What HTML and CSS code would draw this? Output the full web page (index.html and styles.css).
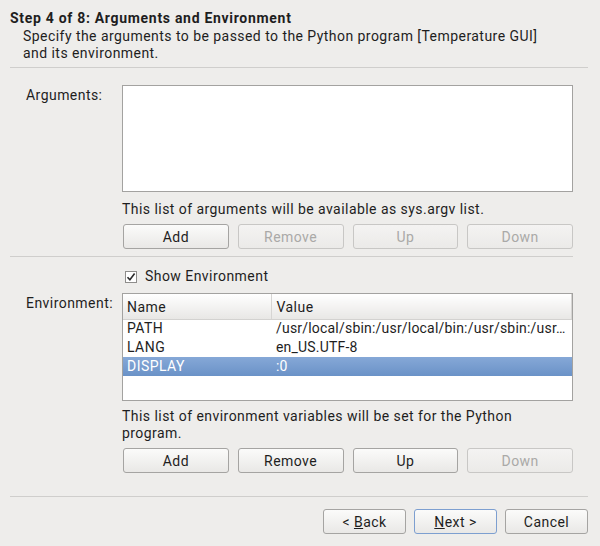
FILE: index.html
```html
<!DOCTYPE html>
<html lang="en">
<head>
  <meta charset="UTF-8" />
  <title>Step 4 of 8: Arguments and Environment</title>
  <link rel="stylesheet" href="styles.css">
</head>
<body>
  <div class="wizard">
    <!-- Step header -->
    <div class="step-head">
      <h1 class="step-title">Step 4 of 8: Arguments and Environment</h1>
      <p class="step-desc">Specify the arguments to be passed to the Python program [Temperature GUI]<br>and its environment.</p>
    </div>
    <hr class="sep sep-head">

    <!-- Arguments -->
    <div class="form-row">
      <div class="row-label">Arguments:</div>
      <div class="row-body">
        <div class="list-box args-box"></div>
        <p class="hint">This list of arguments will be available as sys.argv list.</p>
        <div class="btn-row">
          <button class="btn">Add</button>
          <button class="btn" disabled>Remove</button>
          <button class="btn" disabled>Up</button>
          <button class="btn" disabled>Down</button>
        </div>
      </div>
    </div>
    <hr class="sep sep-inner">

    <!-- Environment -->
    <div class="form-row">
      <div class="row-label"></div>
      <div class="row-body">
        <label class="check">
          <span class="check-box">
            <svg width="12" height="12" viewBox="0 0 12 12"><path d="M2.5 6.2 L4.9 8.8 L9.6 2.6" fill="none" stroke="#2b2b2b" stroke-width="1.6"/></svg>
          </span>
          Show Environment
        </label>
      </div>
    </div>
    <div class="form-row env-row">
      <div class="row-label">Environment:</div>
      <div class="row-body">
        <div class="list-box env-box">
          <table class="env-table">
            <colgroup><col class="col-name"><col></colgroup>
            <thead>
              <tr><th>Name</th><th>Value</th></tr>
            </thead>
            <tbody>
              <tr><td>PATH</td><td>/usr/local/sbin:/usr/local/bin:/usr/sbin:/usr…</td></tr>
              <tr><td>LANG</td><td>en_US.UTF-8</td></tr>
              <tr class="selected"><td>DISPLAY</td><td>:0</td></tr>
            </tbody>
          </table>
        </div>
        <p class="hint hint-env">This list of environment variables will be set for the Python<br>program.</p>
        <div class="btn-row">
          <button class="btn">Add</button>
          <button class="btn">Remove</button>
          <button class="btn">Up</button>
          <button class="btn" disabled>Down</button>
        </div>
      </div>
    </div>
    <hr class="sep sep-foot">

    <!-- Navigation -->
    <div class="nav-row">
      <button class="btn nav-btn">&lt; <u>B</u>ack</button>
      <button class="btn nav-btn default"><u>N</u>ext &gt;</button>
      <button class="btn nav-btn">Cancel</button>
    </div>
  </div>
</body>
</html>
```

FILE: styles.css
```css
* {
  box-sizing: border-box;
}

body {
  margin: 0;
  background: #eeedeb;
  font-family: Roboto, "Open Sans", sans-serif;
  font-size: 14px;
  line-height: 17px;
  letter-spacing: 0.45px;
  color: #1e1e1e;
}

.wizard {
  padding: 10px 12px 0 10px;
}

.step-title {
  margin: 0;
  font-size: 14px;
  font-weight: bold;
  line-height: 17px;
  letter-spacing: 0.7px;
}

.step-desc {
  margin: 1px 0 0 13px;
}

.sep {
  margin: 5px 0 0 0;
  border: none;
  border-top: 1px solid #cfcecc;
  height: 0;
}

.sep-head {
  margin-bottom: 17px;
}

.form-row {
  display: flex;
  margin-left: 16px;
}

.row-label {
  width: 96px;
  flex: none;
  padding-top: 2px;
}

.row-body {
  width: 451px;
  flex: none;
}

.list-box {
  background: #fff;
  border: 1px solid #a3a2a0;
}

.args-box {
  height: 107px;
}

.hint {
  margin: 9px 0 0 0;
}

.btn-row {
  display: grid;
  grid-template-columns: repeat(4, 1fr);
  gap: 9px;
  margin-top: 6px;
  padding-left: 1px;
}

.btn {
  height: 25px;
  padding: 0 8px;
  font-family: inherit;
  font-size: 14px;
  letter-spacing: 0.45px;
  color: #1e1e1e;
  background: linear-gradient(#fbfbfa, #e9e8e6);
  border: 1px solid #a5a4a2;
  border-radius: 3px;
}

.btn:disabled {
  color: #aaa9a7;
  background: linear-gradient(#f4f3f2, #ebeae8);
  border-color: #c8c7c5;
}

.sep-inner {
  margin: 7px 15px 0 0;
}

.check {
  display: flex;
  align-items: center;
  gap: 8px;
  margin-top: 11px;
  padding-left: 3px;
}

.check-box {
  display: inline-block;
  width: 12px;
  height: 12px;
  background: #fff;
  border: 1px solid #8e8d8b;
  line-height: 0;
}

.check-box svg {
  margin: -1px 0 0 -1px;
}

.env-row {
  margin-top: 8px;
}

.env-box {
  height: 108px;
  overflow: hidden;
}

.env-table {
  width: 100%;
  border-collapse: collapse;
  table-layout: fixed;
}

.col-name {
  width: 148px;
}

.env-table th {
  height: 25px;
  padding: 2px 4px 0;
  text-align: left;
  font-weight: normal;
  background: linear-gradient(#ffffff, #e8e7e5);
  border-bottom: 1px solid #d3d2d0;
}

.env-table th + th {
  border-left: 1px solid #d6d5d3;
  border-right: 1px solid #d6d5d3;
  padding-left: 5px;
}

.env-table td {
  height: 19px;
  padding: 0 4px;
  white-space: nowrap;
  overflow: hidden;
}

.env-table td + td {
  padding-left: 5px;
  letter-spacing: 0.2px;
}

.env-table tr.selected td {
  color: #fff;
  background: linear-gradient(#86a8d7, #6a92c7);
}

.hint-env {
  margin-top: 7px;
}

.env-row .btn-row {
  margin-top: 6px;
}

.sep-foot {
  margin-top: 23px;
}

.nav-row {
  display: flex;
  justify-content: flex-end;
  gap: 8px;
  margin-top: 12px;
}

.nav-btn {
  width: 83px;
  height: 25px;
}

.nav-btn.default {
  border-color: #7d9fd0;
}
```
